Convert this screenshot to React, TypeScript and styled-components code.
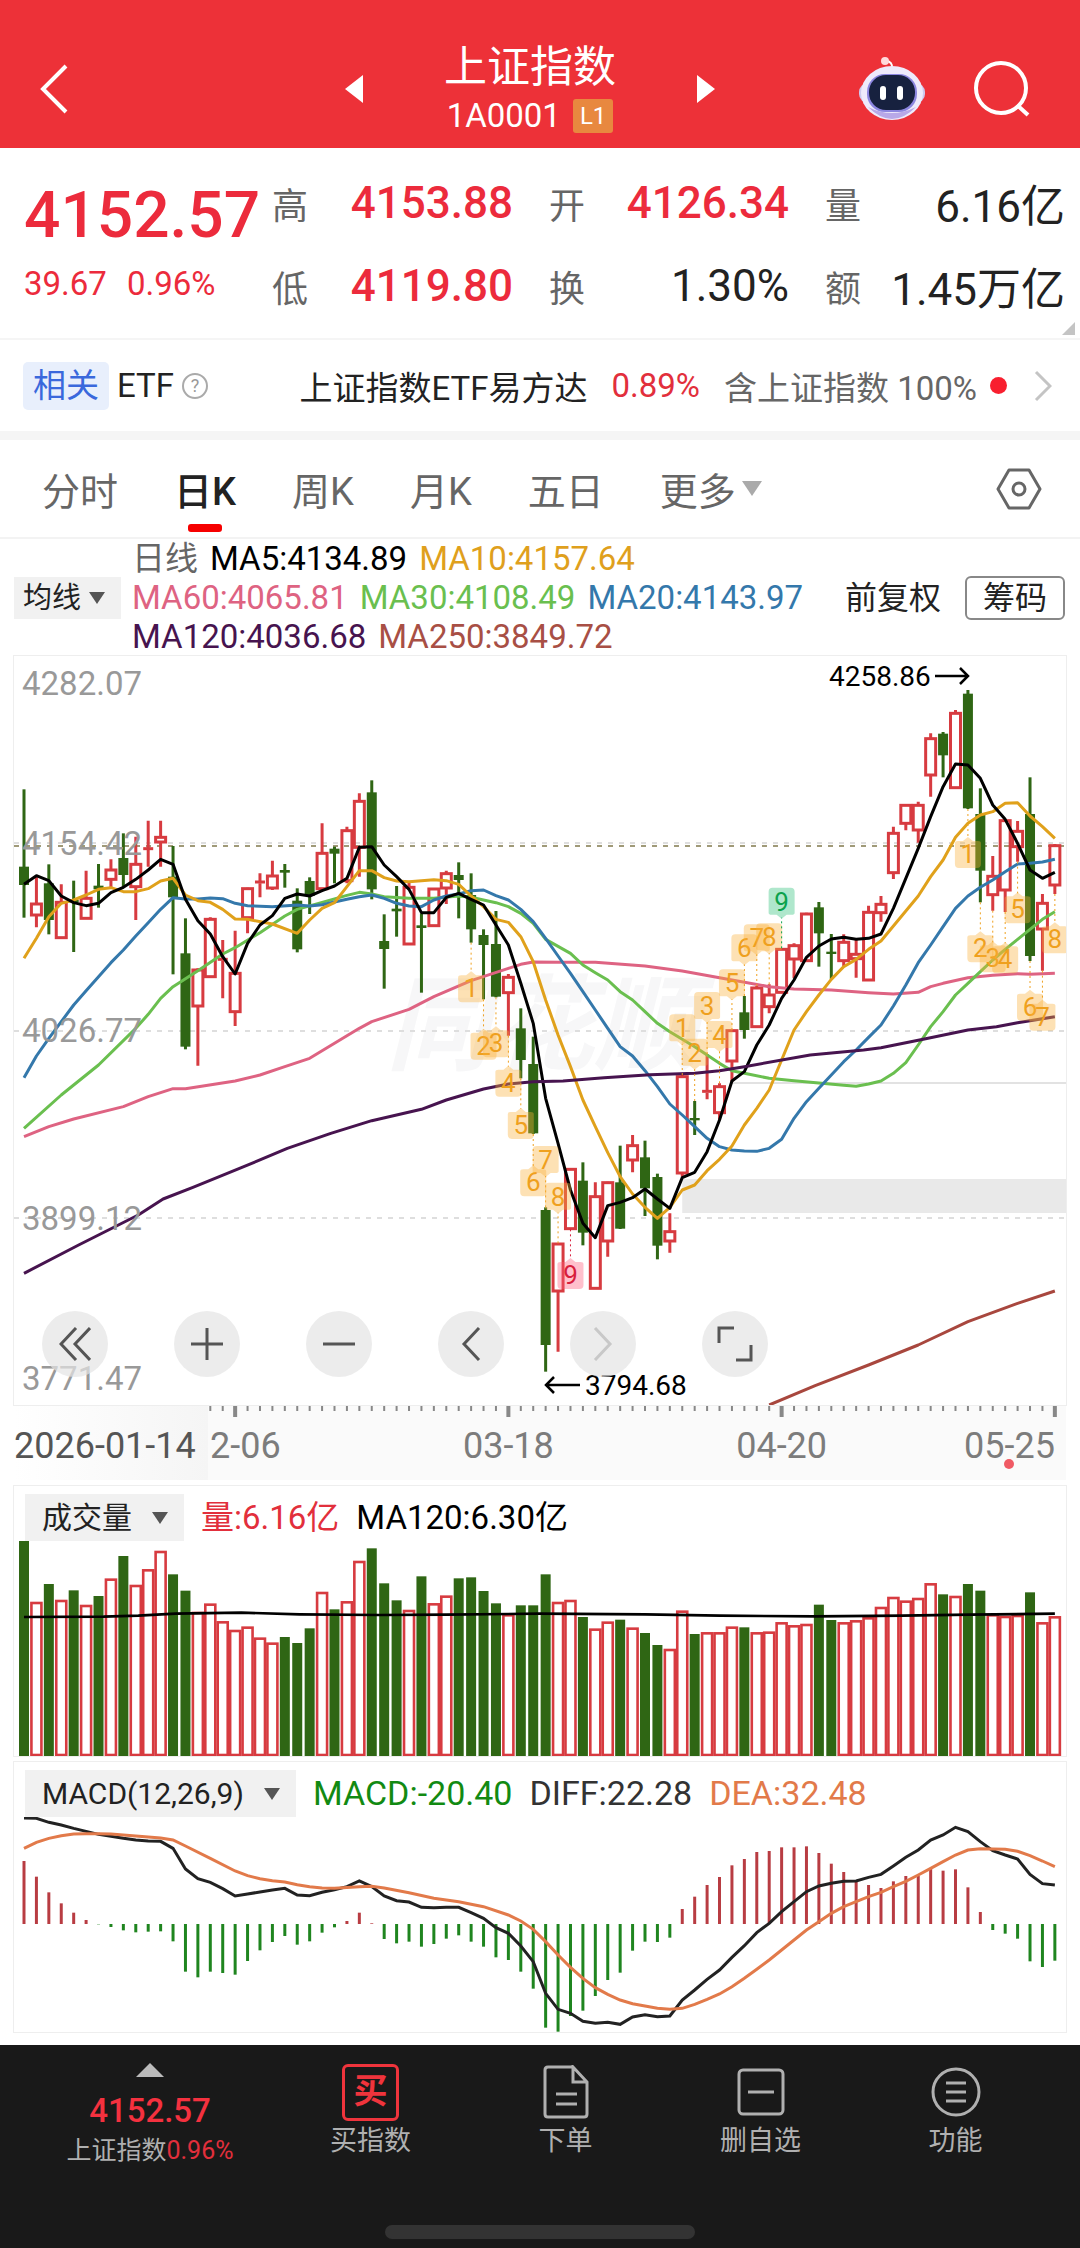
import { useState } from "react";
import styled, { createGlobalStyle } from "styled-components";

const GlobalStyle = createGlobalStyle`
  * {
    box-sizing: border-box;
  }
  body {
    margin: 0;
    background: #fff;
    color: #222;
    font-family: Roboto, "Noto Sans CJK SC", sans-serif;
  }
  button, select {
    border: none;
    padding: 0;
    background: none;
    font-family: inherit;
    color: inherit;
    cursor: pointer;
  }
  svg {
    display: block;
  }
`;

const Page = styled.div`
  min-height: 100vh;
  display: flex;
  flex-direction: column;
`;

/* ---------- header ---------- */

const Header = styled.header`
  display: grid;
  grid-template-columns: 1fr auto 1fr;
  align-items: center;
  height: 148px;
  padding: 30px 50px 0 30px;
  background: #ed3138;
  color: #fff;
`;

const IconButton = styled.button`
  display: flex;
  align-items: center;
  justify-content: center;
`;

const BackButton = styled(IconButton)`
  justify-self: start;
  padding-left: 10px;
`;

const Switcher = styled.div`
  display: flex;
  align-items: center;
  gap: 78px;
`;

const TitleBlock = styled.div`
  display: flex;
  flex-direction: column;
  align-items: center;
  width: 178px;
`;

const Title = styled.h1`
  margin: 0;
  font-size: 43px;
  line-height: 54px;
  font-weight: 400;
`;

const Code = styled.div`
  display: flex;
  align-items: center;
  gap: 12px;
  font-size: 33px;
  line-height: 44px;
`;

const Level = styled.span`
  padding: 0 7px;
  border-radius: 3px;
  background: #e8883f;
  font-size: 24px;
  line-height: 34px;
`;

const HeaderTools = styled.div`
  display: flex;
  justify-content: flex-end;
  align-items: center;
  gap: 48px;
`;

/* ---------- quote ---------- */

const Quote = styled.section`
  position: relative;
  display: grid;
  grid-template-columns: 248fr 241fr 276fr 276fr;
  padding: 13px 15px 11px 24px;
  border-bottom: 2px solid #f5f5f5;
`;

const PriceBlock = styled.div`
  padding-top: 13px;
  color: #ec2b3c;
`;

const Price = styled.div`
  font-size: 64px;
  line-height: 84px;
  font-weight: 500;
`;

const Change = styled.div`
  display: flex;
  gap: 20px;
  font-size: 33px;
  line-height: 52px;
`;

const Stats = styled.dl`
  margin: 0;
  & + & {
    padding-left: 36px;
  }
`;

const Stat = styled.div`
  display: flex;
  justify-content: space-between;
  align-items: center;
  height: 83px;
  white-space: nowrap;

  & > dt {
    font-size: 36px;
    color: #666;
  }
`;

const StatValue = styled.dd<{ $up?: boolean }>`
  margin: 0;
  font-size: 44px;
  font-weight: ${(p) => (p.$up ? 500 : 400)};
  color: ${(p) => (p.$up ? "#ec2b3c" : "#222")};
`;

const Corner = styled.span`
  position: absolute;
  right: 5px;
  bottom: 3px;
  border-left: 13px solid transparent;
  border-bottom: 13px solid #c4c4c4;
`;

/* ---------- related ETF ---------- */

const EtfRow = styled.a`
  display: flex;
  align-items: center;
  height: 100px;
  padding: 0 28px 0 23px;
  border-bottom: 9px solid #f5f5f5;
  font-size: 33px;
  color: #222;
  text-decoration: none;
  white-space: nowrap;
`;

const Related = styled.span`
  padding: 0 10px;
  margin-right: 8px;
  border-radius: 5px;
  background: #e8effc;
  color: #3a68dc;
  line-height: 48px;
`;

const Help = styled.span`
  width: 26px;
  height: 26px;
  margin-left: 8px;
  border: 2px solid #aaa;
  border-radius: 50%;
  color: #999;
  font-size: 18px;
  line-height: 22px;
  text-align: center;
`;

const EtfInfo = styled.span`
  display: flex;
  align-items: center;
  gap: 24px;
  margin-left: auto;
`;

const Up = styled.span`
  color: #e22f3c;
`;

const Muted = styled.span`
  color: #666;
`;

const Dot = styled.span`
  width: 17px;
  height: 17px;
  margin: 0 27px 0 13px;
  border-radius: 50%;
  background: #f81f2f;
`;

/* ---------- period tabs ---------- */

const Tabs = styled.nav`
  display: flex;
  align-items: stretch;
  gap: 56px;
  height: 99px;
  padding: 0 38px 0 42px;
  border-bottom: 2px solid #f3f3f3;

  & > :last-child {
    margin-left: auto;
  }
`;

const Tab = styled.button<{ $active?: boolean }>`
  position: relative;
  display: flex;
  align-items: center;
  gap: 6px;
  font-size: 38px;
  font-weight: ${(p) => (p.$active ? 500 : 400)};
  color: ${(p) => (p.$active ? "#222" : "#666")};

  &::after {
    content: "";
    display: ${(p) => (p.$active ? "block" : "none")};
    position: absolute;
    left: 50%;
    bottom: 5px;
    width: 34px;
    height: 8px;
    margin-left: -17px;
    border-radius: 3px;
    background: #f60000;
  }
`;

/* ---------- legend ---------- */

const LegendRow = styled.div`
  display: flex;
  align-items: center;
  height: 117px;
  padding: 0 15px 0 14px;
  white-space: nowrap;
`;

const Legend = styled.div`
  flex: 1;
  margin-left: 11px;
  font-size: 33px;
  line-height: 39px;
`;

const LegendLine = styled.div`
  display: flex;
  gap: 12px;
`;

const Tint = styled.span<{ $color: string }>`
  color: ${(p) => p.$color};
`;

const PlainButton = styled.button`
  font-size: 32px;
  line-height: 42px;
`;

const OutlineButton = styled.button`
  margin-left: 24px;
  padding: 0 16px;
  border: 2px solid #888;
  border-radius: 6px;
  font-size: 32px;
  line-height: 40px;
`;

const PickerBox = styled.label`
  position: relative;
  display: flex;
  align-items: center;
  background: #f1f1f1;

  & > svg {
    position: absolute;
    right: 16px;
    pointer-events: none;
  }
`;

const PickerSelect = styled.select<{ $wide?: boolean }>`
  appearance: none;
  outline: none;
  height: ${(p) => (p.$wide ? 47 : 42)}px;
  padding: ${(p) => (p.$wide ? "0 52px 0 17px" : "0 39px 0 9px")};
  font-size: ${(p) => (p.$wide ? 30 : 29)}px;
`;

/* ---------- charts ---------- */

const Panel = styled.section`
  position: relative;
  margin: 0 14px;
  box-shadow: 0 0 0 1px #eeeeee;

  & > svg {
    width: 100%;
    height: auto;
  }
`;

const AxisBox = styled.div`
  margin: 0 14px 6px;
  background: #fafafa;

  & > svg {
    width: 100%;
    height: auto;
    overflow: visible;
  }
`;

const PanelHead = styled.div<{ $size: number }>`
  display: flex;
  align-items: center;
  gap: 17px;
  height: 55px;
  padding: 8px 11px 0;
  font-size: ${(p) => p.$size}px;
  line-height: 47px;
  white-space: nowrap;
`;

const PanelGap = styled.div`
  height: 6px;
`;

const Controls = styled.div`
  position: absolute;
  left: 28px;
  bottom: 28px;
  display: flex;
  gap: 66px;
`;

const RoundButton = styled.button`
  display: flex;
  align-items: center;
  justify-content: center;
  width: 66px;
  height: 66px;
  border-radius: 50%;
  background: rgba(228, 228, 228, 0.7);
  color: #555;

  &:disabled {
    color: #c8c8c8;
  }
`;

/* ---------- bottom bar ---------- */

const BottomBar = styled.footer`
  flex: 1;
  margin-top: 13px;
  padding: 18px 27px 0;
  background: #191919;
  color: #b0b0b0;
`;

const BottomItems = styled.div`
  display: grid;
  grid-template-columns: 246fr 195fr 195fr 195fr 195fr;
`;

const BottomButton = styled.button`
  display: flex;
  flex-direction: column;
  align-items: center;
  font-size: 27px;
  line-height: 40px;
  white-space: nowrap;
`;

const IconSlot = styled.span`
  display: flex;
  align-items: center;
  justify-content: center;
  height: 58px;
`;

const BuyIcon = styled.span`
  width: 57px;
  height: 57px;
  border: 3px solid #f0343c;
  border-radius: 6px;
  color: #f0343c;
  font-size: 34px;
  font-weight: 700;
  line-height: 49px;
`;

const IndexButton = styled(BottomButton)`
  font-size: 25px;
`;

const IndexPrice = styled.span`
  margin-top: 14px;
  color: #f4313f;
  font-size: 33px;
  font-weight: 500;
`;

const HomeBar = styled.div`
  width: 310px;
  height: 14px;
  margin: 54px auto 15px;
  border-radius: 7px;
  background: #333;
`;

/* ---------- data ---------- */

// Vertical values are stored in thirds of a chart unit, measured downwards.
const STEP = 12.42;
const xAt = (k: number) => 10 + k * STEP;

type Point = [number, number];
// direction, high, body top, body bottom, low
type Candle = ["u" | "d", number, number, number, number];

const CANDLES: Candle[] = [
  ["d", 418, 650, 705, 803], ["u", 680, 762, 795, 832], ["d", 643, 700, 810, 853], ["u", 703, 757, 863, 865],
  ["d", 692, 750, 757, 906], ["u", 662, 745, 805, 807], ["d", 642, 707, 718, 773], ["u", 628, 660, 688, 715],
  ["d", 550, 624, 675, 712], ["u", 560, 643, 710, 810], ["u", 512, 596, 600, 650], ["u", 512, 562, 576, 650],
  ["d", 588, 680, 742, 973], ["d", 805, 910, 1190, 1198], ["u", 955, 960, 1068, 1247], ["u", 802, 808, 980, 984],
  ["u", 870, 928, 932, 1045], ["u", 842, 970, 1085, 1128], ["u", 713, 716, 803, 850], ["u", 670, 696, 700, 742],
  ["u", 632, 678, 714, 720], ["d", 642, 660, 668, 713], ["d", 715, 752, 898, 907], ["d", 682, 693, 738, 792],
  ["u", 520, 610, 716, 720], ["d", 590, 596, 611, 700], ["u", 530, 542, 692, 700], ["u", 430, 454, 592, 680],
  ["d", 391, 427, 718, 748], ["d", 793, 873, 897, 1016], ["d", 708, 776, 784, 860], ["u", 693, 712, 882, 885],
  ["d", 790, 826, 834, 1028], ["u", 715, 717, 827, 830], ["u", 662, 671, 714, 762], ["d", 637, 675, 690, 805],
  ["d", 670, 735, 838, 878], ["d", 838, 855, 885, 1048], ["d", 783, 882, 1040, 1042], ["u", 972, 982, 1028, 1157],
  ["d", 1075, 1135, 1230, 1285], ["d", 1160, 1242, 1450, 1452], ["d", 1672, 1680, 2085, 2165], ["u", 1780, 1782, 1923, 2105],
  ["u", 1556, 1558, 1736, 1738], ["d", 1537, 1592, 1748, 1786], ["u", 1597, 1640, 1915, 1917], ["u", 1595, 1598, 1773, 1820],
  ["d", 1487, 1597, 1736, 1737], ["u", 1455, 1487, 1530, 1567], ["d", 1472, 1522, 1615, 1698], ["d", 1571, 1581, 1787, 1828],
  ["u", 1690, 1745, 1773, 1808], ["u", 1275, 1280, 1569, 1580], ["d", 1353, 1404, 1411, 1455], ["u", 1212, 1324, 1328, 1348],
  ["u", 1300, 1310, 1388, 1410], ["u", 1140, 1142, 1233, 1295], ["d", 1038, 1087, 1140, 1166], ["u", 1008, 1014, 1130, 1133],
  ["u", 1003, 1035, 1070, 1090], ["u", 895, 898, 1027, 1030], ["u", 880, 887, 927, 985], ["u", 788, 792, 932, 935],
  ["d", 756, 772, 850, 950], ["d", 852, 905, 912, 988], ["u", 853, 877, 932, 948], ["u", 868, 913, 926, 983],
  ["u", 767, 787, 990, 993], ["u", 738, 763, 788, 815], ["u", 530, 550, 668, 687], ["u", 463, 466, 520, 541],
  ["u", 455, 466, 540, 578], ["u", 250, 266, 375, 440], ["d", 246, 251, 316, 382], ["u", 180, 190, 413, 416],
  ["d", 120, 131, 475, 477], ["d", 415, 492, 662, 757], ["u", 618, 679, 734, 782], ["u", 508, 512, 720, 786],
  ["u", 513, 544, 590, 635], ["d", 382, 492, 918, 933], ["u", 732, 760, 837, 962], ["u", 582, 587, 705, 732],
];

const MA5 = [
  703, 677, 692, 738, 758, 767, 760, 728, 712, 688, 660, 628, 643, 748, 812, 852, 920, 972, 880, 825, 797,
  745, 732, 738, 722, 708, 685, 592, 590, 645, 680, 718, 788, 788, 742, 730, 748, 765, 825, 885, 1000, 1120,
  1345, 1480, 1620, 1720, 1763, 1667, 1657, 1643, 1617, 1647, 1675, 1583, 1567, 1505, 1410, 1293, 1265, 1185,
  1125, 1045, 990, 922, 888, 867, 862, 868, 865, 852, 775, 685, 595, 500, 410, 342, 345, 385, 465, 508, 580,
  660, 685, 667,
].map((y, k): Point => [k, y]);

const MA10: Point[] = [
  [0, 925], [1, 865], [2, 800], [3, 760], [4, 750], [5, 735], [6, 718], [7, 713], [8, 725], [9, 725], [10, 716],
  [11, 693], [12, 685], [13, 735], [14, 752], [15, 757], [16, 778], [17, 807], [18, 808], [20, 822], [22, 850],
  [23, 810], [24, 775], [25, 758], [26, 710], [27, 662], [28, 662], [29, 683], [30, 693], [31, 695], [32, 692],
  [33, 689], [34, 692], [35, 703], [36, 738], [37, 770], [38, 808], [39, 817], [40, 860], [41, 935], [42, 1050],
  [43, 1155], [44, 1250], [45, 1350], [46, 1430], [47, 1508], [48, 1580], [49, 1632], [50, 1672], [51, 1705],
  [52, 1672], [53, 1620], [54, 1605], [55, 1562], [56, 1528], [57, 1488], [58, 1425], [59, 1375], [60, 1320],
  [61, 1230], [62, 1140], [63, 1085], [64, 1035], [65, 988], [66, 950], [67, 928], [68, 898], [69, 873], [70, 828],
  [71, 783], [72, 738], [73, 680], [74, 630], [75, 562], [76, 520], [77, 495], [78, 485], [79, 460], [80, 458],
  [81, 498], [82, 530], [83, 565],
];

const MA20: Point[] = [
  [0, 1283], [1, 1218], [2, 1165], [3, 1115], [4, 1065], [5, 1022], [6, 980], [7, 938], [8, 900], [9, 858],
  [10, 818], [11, 778], [12, 743], [13, 747], [14, 747], [15, 744], [16, 746], [17, 760], [18, 767], [20, 770],
  [22, 765], [23, 768], [24, 764], [26, 748], [27, 740], [28, 735], [29, 745], [30, 760], [31, 768], [32, 770],
  [33, 750], [34, 738], [35, 732], [36, 722], [37, 720], [38, 737], [39, 750], [40, 778], [41, 815], [42, 865],
  [43, 918], [44, 970], [45, 1025], [46, 1080], [47, 1135], [48, 1190], [49, 1218], [50, 1262], [51, 1310],
  [52, 1362], [53, 1395], [54, 1430], [55, 1465], [56, 1490], [57, 1500], [58, 1503], [59, 1504], [60, 1495],
  [61, 1468], [62, 1405], [63, 1355], [64, 1315], [65, 1275], [66, 1235], [67, 1200], [68, 1162], [69, 1125],
  [70, 1068], [71, 1005], [72, 938], [73, 885], [74, 830], [75, 775], [76, 738], [77, 712], [78, 690], [79, 665],
  [80, 642], [81, 640], [82, 636], [83, 628],
];

const MA30: Point[] = [
  [0, 1435], [3, 1335], [6, 1245], [9, 1135], [10, 1093], [11, 1045], [12, 1010], [14, 962], [16, 912], [17, 893],
  [19, 848], [21, 798], [22, 778], [24, 757], [26, 736], [27, 727], [28, 732], [29, 740], [31, 745], [33, 745],
  [35, 738], [36, 742], [38, 758], [39, 770], [40, 790], [41, 820], [42, 868], [44, 910], [45, 945], [46, 968],
  [47, 990], [48, 1025], [49, 1050], [50, 1085], [51, 1120], [52, 1145], [54, 1190], [55, 1215], [56, 1240],
  [57, 1262], [58, 1270], [60, 1285], [62, 1292], [64, 1299], [66, 1306], [67, 1309], [68, 1302], [69, 1293],
  [70, 1270], [71, 1238], [72, 1185], [73, 1130], [74, 1085], [75, 1035], [76, 1000], [77, 965], [78, 930],
  [79, 898], [80, 868], [81, 838], [82, 808], [83, 785],
];

const MA60: Point[] = [
  [0, 1460], [2, 1430], [4, 1407], [8, 1370], [10, 1340], [12, 1316], [13, 1316], [17, 1293], [19, 1275],
  [21, 1250], [23, 1225], [25, 1180], [27, 1135], [28, 1115], [31, 1078], [33, 1040], [36, 992], [39, 955],
  [40, 943], [41, 936], [43, 937], [46, 937], [50, 948], [53, 963], [56, 983], [60, 1010], [62, 1017], [65, 1020],
  [68, 1028], [70, 1032], [72, 1027], [73, 1010], [74, 1000], [76, 983], [78, 976], [80, 971], [81, 973], [83, 970],
];

const MA120: Point[] = [
  [0, 1870], [4.4, 1785], [9.2, 1695], [11.2, 1647], [13.6, 1612], [17.5, 1553], [21.2, 1495], [24.7, 1450],
  [28, 1412], [32, 1378], [34, 1350], [37, 1317], [39, 1302], [41, 1295], [43.4, 1293], [46.7, 1283], [50.4, 1274],
  [54, 1270], [56, 1262], [58, 1250], [63.3, 1215], [67.6, 1200], [69, 1193], [72.4, 1168], [76, 1140],
  [78.3, 1130], [80, 1118], [83, 1100],
];

const MA250: Point[] = [
  [60, 2265], [63.7, 2207], [68, 2145], [72, 2085], [76, 2015], [80, 1960], [83, 1923],
];

const AVERAGES = [
  { color: "#de6382", points: MA60 },
  { color: "#6abf4f", points: MA30 },
  { color: "#3478ab", points: MA20 },
  { color: "#e0a11b", points: MA10 },
  { color: "#000000", points: MA5 },
  { color: "#47144f", points: MA120 },
  { color: "#a8473e", points: MA250 },
];

// candle index, label, centre of the badge, which side of the candle it hangs on
const BADGES: [number, string, number, "above" | "below"][] = [
  [36, "1", 1015, "below"], [37, "2", 1187, "below"], [38, "3", 1180, "below"], [39, "4", 1298, "below"],
  [40, "5", 1425, "below"], [41, "6", 1597, "below"], [42, "7", 1530, "above"], [43, "8", 1640, "above"],
  [44, "9", 1875, "below"], [53, "1", 1135, "above"], [54, "2", 1208, "above"], [55, "3", 1068, "above"],
  [56, "4", 1155, "above"], [57, "5", 1000, "above"], [58, "6", 895, "above"], [59, "7", 865, "above"],
  [60, "8", 862, "above"], [61, "9", 755, "above"], [76, "1", 612, "below"], [77, "2", 895, "below"],
  [78, "3", 925, "below"], [79, "4", 928, "below"], [80, "5", 778, "below"], [81, "6", 1070, "below"],
  [82, "7", 1100, "below"], [83, "8", 868, "below"],
];

const VOLUME = [
  183, 366, 312, 360, 331, 375, 348, 296, 228, 315, 268, 213, 283, 332, 396, 371, 424, 450, 440, 473, 488,
  471, 489, 445, 336, 388, 364, 243, 205, 310, 361, 390, 289, 370, 347, 295, 292, 333, 370, 403, 376, 376,
  283, 366, 360, 411, 446, 425, 419, 443, 459, 495, 507, 392, 462, 457, 457, 440, 442, 457, 455, 427, 436,
  432, 374, 420, 427, 421, 412, 381, 351, 362, 354, 310, 343, 348, 312, 332, 403, 408, 405, 337, 427, 409,
];

const VOLUME_MA: Point[] = [
  [0, 411], [6.4, 410], [9.2, 407], [12.2, 401], [17.5, 398], [22.2, 403], [28.6, 405], [34, 404], [41.5, 401],
  [50, 403], [56, 407], [63.7, 409], [70.7, 407], [76.2, 404], [83, 401],
];

const MACD = [
  303, 350, 397, 430, 458, 480, 493, 501, 511, 517, 515, 514, 544, 635, 652, 635, 639, 644, 603, 571, 546,
  528, 554, 544, 518, 502, 483, 458, 490, 537, 550, 545, 560, 552, 536, 526, 545, 560, 592, 600, 635, 686,
  803, 815, 768, 752, 708, 660, 638, 572, 545, 546, 533, 447, 410, 375, 351, 316, 297, 276, 273, 262, 262,
  259, 279, 311, 336, 365, 375, 384, 364, 348, 348, 325, 332, 328, 382, 456, 510, 521, 536, 604, 621, 602,
];

const DIFF = [
  174, 175, 187, 195, 205, 214, 223, 229, 235, 240, 243, 244, 265, 327, 356, 367, 386, 408, 402, 396, 390,
  385, 405, 407, 397, 389, 380, 363, 380, 408, 422, 426, 442, 443, 442, 442, 458, 475, 503, 520, 558, 605,
  700, 748, 760, 784, 790, 787, 793, 771, 764, 770, 768, 720, 690, 658, 630, 592, 557, 518, 490, 455, 425,
  395, 378, 370, 364, 363, 352, 343, 318, 292, 270, 240, 225, 202, 215, 245, 272, 285, 297, 343, 371, 375,
].map((y, k): Point => [k, y]);

const DEA: Point[] = [
  [0, 265], [1, 247], [2, 235], [3, 227], [4, 222], [5, 221], [6, 221], [7, 222], [9, 228], [11, 234], [12, 240],
  [13, 258], [15, 295], [17, 333], [18, 347], [19, 356], [20, 362], [21, 366], [22, 374], [23, 380], [24, 384],
  [25, 385], [27, 380], [28, 379], [29, 384], [31, 398], [33, 415], [35, 425], [37, 440], [39, 465], [40, 483],
  [41, 508], [42, 545], [43, 585], [44, 622], [45, 655], [46, 683], [47, 703], [48, 720], [49, 731], [50, 738],
  [51, 745], [52, 748], [53, 745], [54, 733], [55, 718], [56, 702], [57, 680], [58, 655], [59, 628], [60, 600],
  [61, 570], [62, 540], [63, 510], [64, 485], [65, 460], [66, 440], [67, 425], [68, 410], [69, 397], [70, 380],
  [71, 364], [72, 345], [73, 325], [74, 305], [75, 285], [76, 270], [77, 266], [79, 268], [80, 274], [81, 287],
  [82, 303], [83, 320],
];

const PRICE_LABELS: [string, number][] = [
  ["4282.07", 39], ["4154.42", 199], ["4026.77", 386], ["3899.12", 574], ["3771.47", 734],
];

const DATES: [string, number][] = [["03-18", 39], ["04-20", 61]];

const RED = "#d73b40";
const GREEN = "#2f6614";

const linePoints = (points: Point[], top: number) =>
  points.map(([k, v]) => `${xAt(k)},${(v - top) / 3}`).join(" ");

const Caret = ({ size = 16, color = "#555" }) => (
  <svg width={size} height={size * 0.75} viewBox="0 0 16 12" fill={color}>
    <path d="M0 0h16L8 12z" />
  </svg>
);

type PickerProps = { name: string; options: string[]; wide?: boolean };

const Picker = ({ name, options, wide }: PickerProps) => {
  const [value, setValue] = useState(options[0]);
  return (
    <PickerBox>
      <PickerSelect
        aria-label={name}
        $wide={wide}
        value={value}
        onChange={(e) => setValue(e.target.value)}
      >
        {options.map((o) => (
          <option key={o}>{o}</option>
        ))}
      </PickerSelect>
      <Caret />
    </PickerBox>
  );
};

const badgeStyle = (label: string, side: string) => {
  if (label !== "9") return { fill: "#fbb03b", text: "#efa01e" };
  return side === "above"
    ? { fill: "#2cc07a", text: "#0ca24c" }
    : { fill: "#ff5a78", text: "#d81e3c" };
};

const PriceChart = () => {
  const y = (v: number) => (v - 18) / 3;
  return (
    <svg viewBox="0 0 1052 749">
      <text x="372" y="406" fontSize="104" fontWeight="700" fontStyle="italic" fill="#f7f7f8">
        同花顺
      </text>
      <g stroke="#dedede" strokeWidth="2" strokeDasharray="5 6">
        <path d="M0 187H1052M0 375H1052M0 562H1052" />
      </g>
      <path d="M0 190H1052" stroke="#a09a78" strokeWidth="2" strokeDasharray="5 6" />
      <rect x={xAt(53)} y="523" width={1052 - xAt(53)} height="34" fill="#e9e9e9" />
      <path d="M718 427H1052" stroke="#e2e2e2" strokeWidth="2" />

      {CANDLES.map(([dir, high, top, bottom, low], k) => {
        const x = xAt(k);
        const flat = bottom - top < 9;
        return dir === "u" ? (
          <g key={k} fill="none" stroke={RED} strokeWidth="3">
            <path d={`M${x} ${y(high)}V${y(top)}M${x} ${y(bottom)}V${y(low)}`} />
            {flat ? (
              <path d={`M${x - 5} ${y(top)}h10`} />
            ) : (
              <rect x={x - 5} y={y(top)} width="10" height={(bottom - top) / 3} />
            )}
          </g>
        ) : (
          <g key={k} fill={GREEN}>
            <rect x={x - 1.5} y={y(high)} width="3" height={(low - high) / 3} />
            <rect x={x - 5} y={y(top)} width="10" height={(bottom - top) / 3} />
          </g>
        );
      })}

      {AVERAGES.map(({ color, points }) => (
        <polyline
          key={color}
          points={linePoints(points, 18)}
          fill="none"
          stroke={color}
          strokeWidth="3"
          strokeLinejoin="round"
        />
      ))}

      {BADGES.map(([k, label, centre, side]) => {
        const { fill, text } = badgeStyle(label, side);
        const x = xAt(k);
        const cy = y(centre);
        const flip = side === "above" ? -1 : 1;
        const candle = CANDLES[k];
        const from = side === "above" ? y(candle[1]) : y(candle[4]);
        return (
          <g key={k}>
            <path d={`M${x} ${from}V${cy - flip * 16}`} stroke={text} strokeDasharray="2 3" />
            <path
              transform={`translate(${x} ${cy}) scale(1 ${flip})`}
              d="M-13-11Q-13-13-10-13H-5L0-17L5-13H10Q13-13 13-11V10Q13 14 9 14H-9Q-13 14-13 10Z"
              fill={fill}
              opacity="0.38"
            />
            <text x={x} y={cy + 9} fontSize="26" fill={text} textAnchor="middle">
              {label}
            </text>
          </g>
        );
      })}

      <g fontSize="33" fill="#999">
        {PRICE_LABELS.map(([label, at]) => (
          <text key={label} x="8" y={at}>
            {label}
          </text>
        ))}
      </g>
      <g fontSize="28" fill="#000">
        <text x="815" y="30">4258.86</text>
        <text x="571" y="739">3794.68</text>
      </g>
      <path
        d="M921 20H954M946 12L954 20L946 28M566 729H532M540 721L532 729L540 737"
        fill="none"
        stroke="#000"
        strokeWidth="2.5"
      />
    </svg>
  );
};

const DateAxis = () => (
  <svg viewBox="0 0 1052 75">
    <defs>
      <linearGradient id="fade">
        <stop offset="0" stopColor="#fff" />
        <stop offset="1" stopColor="#f5f5f5" />
      </linearGradient>
    </defs>
    <rect width="194" height="75" fill="url(#fade)" />
    {CANDLES.map((_, k) => {
      if (k < 15) return null;
      const major = (k - 17) % 22 === 0;
      return (
        <rect
          key={k}
          x={xAt(k) - (major ? 2 : 1)}
          y="1"
          width={major ? 4 : 2}
          height={major ? 11 : 5}
          fill="#888"
        />
      );
    })}
    <g fontSize="36" fill="#7c7c7c">
      <text x="0" y="53" fill="#555">2026-01-14</text>
      <text x="196" y="53">2-06</text>
      {DATES.map(([label, k]) => (
        <text key={label} x={xAt(k)} y="53" textAnchor="middle">
          {label}
        </text>
      ))}
      <text x="1041" y="53" textAnchor="end">05-25</text>
    </g>
    <circle cx="995" cy="59" r="5" fill="#f05a64" />
  </svg>
);

const VolumeChart = () => (
  <svg viewBox="0 0 1052 215">
    {VOLUME.map((v, k) => {
      const top = (v - 183) / 3;
      return CANDLES[k][0] === "u" ? (
        <rect
          key={k}
          x={xAt(k) - 5}
          y={top + 1}
          width="10"
          height={213 - top}
          fill="#fff"
          stroke={RED}
          strokeWidth="2.6"
        />
      ) : (
        <rect key={k} x={xAt(k) - 5} y={top} width="10" height={215 - top} fill={GREEN} />
      );
    })}
    <polyline points={linePoints(VOLUME_MA, 183)} fill="none" stroke="#000" strokeWidth="2.6" />
  </svg>
);

const MacdChart = () => (
  <svg viewBox="0 0 1052 215">
    {MACD.map((v, k) => (
      <path
        key={k}
        d={`M${xAt(k)} 107V${(v - 171) / 3}`}
        stroke={v < 492 ? "#b83c42" : "#1f851f"}
        strokeWidth="3"
      />
    ))}
    <polyline points={linePoints(DIFF, 171)} fill="none" stroke="#222" strokeWidth="3" />
    <polyline points={linePoints(DEA, 171)} fill="none" stroke="#e27a4a" strokeWidth="3" />
  </svg>
);

const Robot = () => (
  <svg width="68" height="64" viewBox="0 0 68 64">
    <path d="M34 12C35 7 32 4 28 4" fill="none" stroke="#fff" strokeWidth="2" />
    <circle cx="27" cy="4" r="4" fill="#ffd9dc" />
    <rect x="1" y="26" width="66" height="20" rx="9" fill="#cdc9ee" />
    <ellipse cx="34" cy="36" rx="31" ry="27" fill="#eeeafb" />
    <path d="M10 50Q34 74 58 50Q34 62 10 50z" fill="#b8a8e8" />
    <rect x="9" y="17" width="50" height="38" rx="18" fill="#8c86e0" />
    <rect x="11" y="18" width="46" height="35" rx="17" fill="#17213f" />
    <rect x="22" y="29" width="6" height="14" rx="3" fill="#fff" />
    <rect x="39" y="29" width="6" height="14" rx="3" fill="#fff" />
  </svg>
);

const stroke = {
  fill: "none",
  stroke: "currentColor",
  strokeWidth: 3,
} as const;

const TABS = ["分时", "日K", "周K", "月K", "五日"];

const App = () => {
  const [tab, setTab] = useState("日K");
  return (
    <Page>
      <GlobalStyle />
      <Header>
        <BackButton aria-label="返回">
          <svg width="28" height="50" viewBox="0 0 28 50" {...stroke} strokeWidth={4}>
            <path d="M26 2L3 25L26 48" />
          </svg>
        </BackButton>
        <Switcher>
          <IconButton aria-label="上一个">
            <svg width="18" height="28" viewBox="0 0 18 28" fill="#fff">
              <path d="M18 0V28L0 14z" />
            </svg>
          </IconButton>
          <TitleBlock>
            <Title>上证指数</Title>
            <Code>
              1A0001 <Level>L1</Level>
            </Code>
          </TitleBlock>
          <IconButton aria-label="下一个">
            <svg width="18" height="28" viewBox="0 0 18 28" fill="#fff">
              <path d="M0 0V28L18 14z" />
            </svg>
          </IconButton>
        </Switcher>
        <HeaderTools>
          <IconButton aria-label="助手">
            <Robot />
          </IconButton>
          <IconButton aria-label="搜索">
            <svg width="56" height="56" viewBox="0 0 56 56" {...stroke} strokeWidth={4}>
              <circle cx="27" cy="27" r="25" />
              <path d="M43 44L54 54" />
            </svg>
          </IconButton>
        </HeaderTools>
      </Header>

      <Quote>
        <PriceBlock>
          <Price>4152.57</Price>
          <Change>
            <span>39.67</span>
            <span>0.96%</span>
          </Change>
        </PriceBlock>
        <Stats>
          <Stat>
            <dt>高</dt>
            <StatValue $up>4153.88</StatValue>
          </Stat>
          <Stat>
            <dt>低</dt>
            <StatValue $up>4119.80</StatValue>
          </Stat>
        </Stats>
        <Stats>
          <Stat>
            <dt>开</dt>
            <StatValue $up>4126.34</StatValue>
          </Stat>
          <Stat>
            <dt>换</dt>
            <StatValue>1.30%</StatValue>
          </Stat>
        </Stats>
        <Stats>
          <Stat>
            <dt>量</dt>
            <StatValue>6.16亿</StatValue>
          </Stat>
          <Stat>
            <dt>额</dt>
            <StatValue>1.45万亿</StatValue>
          </Stat>
        </Stats>
        <Corner />
      </Quote>

      <EtfRow href="#etf">
        <Related>相关</Related>
        ETF
        <Help>?</Help>
        <EtfInfo>
          <span>上证指数ETF易方达</span>
          <Up>0.89%</Up>
          <Muted>含上证指数 100%</Muted>
        </EtfInfo>
        <Dot />
        <svg width="18" height="32" viewBox="0 0 18 32" fill="none" stroke="#c4c4c4" strokeWidth="3">
          <path d="M2 2L16 16L2 30" />
        </svg>
      </EtfRow>

      <Tabs>
        {TABS.map((t) => (
          <Tab key={t} $active={t === tab} onClick={() => setTab(t)}>
            {t}
          </Tab>
        ))}
        <Tab aria-haspopup="menu">
          更多
          <Caret size={20} color="#aaa" />
        </Tab>
        <Tab aria-label="设置">
          <svg width="46" height="42" viewBox="0 0 46 42" {...stroke}>
            <path d="M13 2H33L44 21L33 40H13L2 21z" strokeLinejoin="round" />
            <circle cx="23" cy="21" r="6" />
          </svg>
        </Tab>
      </Tabs>

      <LegendRow>
        <Picker name="主图指标" options={["均线"]} />
        <Legend>
          <LegendLine>
            <Tint $color="#666">日线</Tint>
            <Tint $color="#000">MA5:4134.89</Tint>
            <Tint $color="#dfa01d">MA10:4157.64</Tint>
          </LegendLine>
          <LegendLine>
            <Tint $color="#de6382">MA60:4065.81</Tint>
            <Tint $color="#6abf4f">MA30:4108.49</Tint>
            <Tint $color="#3478ab">MA20:4143.97</Tint>
          </LegendLine>
          <LegendLine>
            <Tint $color="#47144f">MA120:4036.68</Tint>
            <Tint $color="#a84f45">MA250:3849.72</Tint>
          </LegendLine>
        </Legend>
        <PlainButton>前复权</PlainButton>
        <OutlineButton>筹码</OutlineButton>
      </LegendRow>

      <Panel>
        <PriceChart />
        <Controls>
          <RoundButton aria-label="最早">
            <svg width="32" height="34" viewBox="0 0 32 34" {...stroke}>
              <path d="M17 1L2 17L17 33M31 1L16 17L31 33" />
            </svg>
          </RoundButton>
          <RoundButton aria-label="放大">
            <svg width="32" height="32" viewBox="0 0 32 32" {...stroke}>
              <path d="M16 0V32M0 16H32" />
            </svg>
          </RoundButton>
          <RoundButton aria-label="缩小">
            <svg width="32" height="32" viewBox="0 0 32 32" {...stroke}>
              <path d="M0 16H32" />
            </svg>
          </RoundButton>
          <RoundButton aria-label="左移">
            <svg width="20" height="34" viewBox="0 0 20 34" {...stroke}>
              <path d="M18 1L3 17L18 33" />
            </svg>
          </RoundButton>
          <RoundButton aria-label="右移" disabled>
            <svg width="20" height="34" viewBox="0 0 20 34" {...stroke}>
              <path d="M2 1L17 17L2 33" />
            </svg>
          </RoundButton>
          <RoundButton aria-label="全屏">
            <svg width="36" height="36" viewBox="0 0 36 36" {...stroke}>
              <path d="M2 17V2H17M34 19V34H19" />
            </svg>
          </RoundButton>
        </Controls>
      </Panel>
      <AxisBox>
        <DateAxis />
      </AxisBox>

      <Panel>
        <PanelHead $size={33}>
          <Picker wide name="成交量指标" options={["成交量"]} />
          <Up>量:6.16亿</Up>
          <Tint $color="#000">MA120:6.30亿</Tint>
        </PanelHead>
        <VolumeChart />
      </Panel>
      <PanelGap />
      <Panel>
        <PanelHead $size={34}>
          <Picker wide name="副图指标" options={["MACD(12,26,9)"]} />
          <Tint $color="#128a12">MACD:-20.40</Tint>
          <Tint $color="#333">DIFF:22.28</Tint>
          <Tint $color="#e27a4a">DEA:32.48</Tint>
        </PanelHead>
        <MacdChart />
      </Panel>

      <BottomBar>
        <BottomItems>
          <IndexButton>
            <svg width="28" height="14" viewBox="0 0 28 14" fill="#bbb">
              <path d="M14 0L28 14H0z" />
            </svg>
            <IndexPrice>4152.57</IndexPrice>
            <span>
              上证指数<Up>0.96%</Up>
            </span>
          </IndexButton>
          <BottomButton>
            <IconSlot>
              <BuyIcon>买</BuyIcon>
            </IconSlot>
            买指数
          </BottomButton>
          <BottomButton>
            <IconSlot>
              <svg width="46" height="54" viewBox="0 0 46 54" {...stroke}>
                <path d="M30 2H5Q2 2 2 5V49Q2 52 5 52H41Q44 52 44 49V17L30 2V17H44M13 29H34M13 39H34" />
              </svg>
            </IconSlot>
            下单
          </BottomButton>
          <BottomButton>
            <IconSlot>
              <svg width="48" height="48" viewBox="0 0 48 48" {...stroke}>
                <rect x="2" y="2" width="44" height="44" rx="4" />
                <path d="M11 24H37" />
              </svg>
            </IconSlot>
            删自选
          </BottomButton>
          <BottomButton>
            <IconSlot>
              <svg width="50" height="50" viewBox="0 0 50 50" {...stroke}>
                <circle cx="25" cy="25" r="23" />
                <path d="M15 16H35M15 25H35M15 34H35" />
              </svg>
            </IconSlot>
            功能
          </BottomButton>
        </BottomItems>
        <HomeBar />
      </BottomBar>
    </Page>
  );
};

export default App;
